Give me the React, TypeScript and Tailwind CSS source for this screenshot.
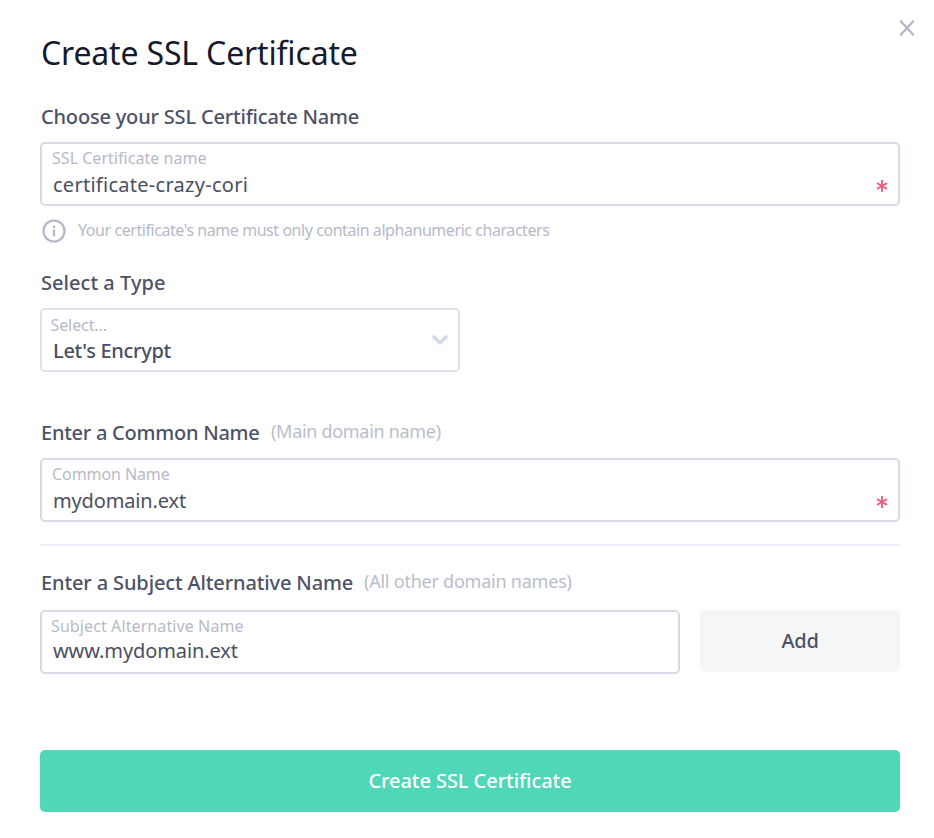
import React from "react";

function Asterisk() {
  return (
    <svg className="mr-[10px] shrink-0" width="12" height="12" viewBox="0 0 12 12" fill="none" stroke="#ee6080" strokeWidth="1.9">
      <path d="M6 0V12M1 3.2L11 8.8M1 8.8L11 3.2" />
    </svg>
  );
}

type FieldProps = {
  label: string;
  value: string;
  className: string;
  labelClass: string;
  valueClass: string;
  children?: React.ReactNode;
};

function Field({ label, value, className, labelClass, valueClass, children }: FieldProps) {
  return (
    <div className={`flex h-16 rounded-[5px] border-2 bg-white ${className}`}>
      <div className="flex-1">
        <div className={`text-base leading-5 text-[#b6bac8] ${labelClass}`}>{label}</div>
        <div className={`pl-[11px] text-xl leading-6 text-[#4a4f62] ${valueClass}`}>{value}</div>
      </div>
      {children}
    </div>
  );
}

export default function App() {
  return (
    <div className="h-[838px] w-[934px] overflow-hidden whitespace-nowrap bg-white font-['Noto_Sans',sans-serif]">
      <header className="flex h-[103px] justify-between pl-[41px] pr-5">
        <h1 className="pt-8 text-[32px] leading-[42px] tracking-[-0.17px] text-[#151a2d]">Create SSL Certificate</h1>
        <button className="mt-5 h-4 w-[14px]" aria-label="Close">
          <svg width="14" height="16" viewBox="0 0 14 16" fill="none" stroke="#b2b6c5" strokeWidth="2.2" strokeLinecap="round">
            <path d="M0.8 1.2L13.2 14.8M13.2 1.2L0.8 14.8" />
          </svg>
        </button>
      </header>

      <main className="w-[900px] pl-10">
        <h2 className="h-[39px] pl-px text-xl font-medium leading-7 tracking-[-0.19px] text-[#4d5266]">Choose your SSL Certificate Name</h2>
        <Field
          label="SSL Certificate name"
          value="certificate-crazy-cori"
          className="border-[#d5d9e8]"
          labelClass="pt-1 pl-[10px] tracking-[0.03px]"
          valueClass="mt-[5px] tracking-[0.27px]"
        >
          <div className="pt-9"><Asterisk /></div>
        </Field>

        <div className="flex h-[63px] items-start pt-[13px] pl-[2px]">
          <svg width="24" height="24" viewBox="0 0 24 24" fill="none" stroke="#b2b6c5" strokeWidth="2.2">
            <circle cx="12" cy="12" r="10.5" />
            <path d="M12 10.5V17.3M12 6.6V9" />
          </svg>
          <p className="pl-[12px] text-base leading-[22px] tracking-[-0.44px] text-[#b6bac8]">
            Your certificate's name must only contain alphanumeric characters
          </p>
        </div>

        <h2 className="h-[39px] pl-px text-xl font-medium leading-7 tracking-[0.04px] text-[#4d5266]">Select a Type</h2>
        <Field
          label="Select..."
          value="Let's Encrypt"
          className="w-[420px] border-[#dde1ed]"
          labelClass="pt-[5px] pl-[8.5px] tracking-[-0.1px]"
          valueClass="mt-1 font-medium tracking-[-0.3px]"
        >
          <svg className="mr-[9px] mt-6" width="18" height="12" viewBox="0 0 18 12" fill="none" stroke="#d7dbe8" strokeWidth="3.8" strokeLinecap="round" strokeLinejoin="round">
            <path d="M3 3L9 8.8L15 3" />
          </svg>
        </Field>

        <div className="mt-[47px] flex h-[39px] pl-px">
          <h2 className="w-[230px] text-xl font-medium leading-7 tracking-[-0.25px] text-[#4d5266]">Enter a Common Name</h2>
          <span className="text-lg leading-6 tracking-[-0.3px] text-[#b9bdcb]">(Main domain name)</span>
        </div>
        <Field
          label="Common Name"
          value="mydomain.ext"
          className="border-[#d5d9e8]"
          labelClass="pt-1 pl-[10px] tracking-[-0.08px]"
          valueClass="mt-[5px] tracking-[-0.15px]"
        >
          <div className="pt-9"><Asterisk /></div>
        </Field>

        <div className="mt-[22px] h-[2px] bg-[#edf0fc]" />

        <div className="mt-[23px] flex h-[41px] pl-px">
          <h2 className="w-[323px] text-xl font-medium leading-7 tracking-[-0.13px] text-[#4d5266]">Enter a Subject Alternative Name</h2>
          <span className="text-lg leading-6 tracking-[-0.23px] text-[#b9bdcb]">(All other domain names)</span>
        </div>
        <div className="flex items-start gap-5">
          <Field
            label="Subject Alternative Name"
            value="www.mydomain.ext"
            className="w-[640px] border-[#d5d9e8]"
            labelClass="pt-1 pl-[9px] tracking-[0.1px]"
            valueClass="mt-[3px] tracking-[-0.1px]"
          />
          <button className="h-[62px] flex-1 rounded-[5px] bg-[#f5f6f8] text-xl font-medium leading-7 tracking-[-0.3px] text-[#4d5266]">Add</button>
        </div>

        <button className="mt-[76px] h-[62px] w-full rounded-[5px] bg-[#50d7b8] text-xl font-medium leading-7 tracking-[-0.06px] text-white">Create SSL Certificate</button>
      </main>
    </div>
  );
}
